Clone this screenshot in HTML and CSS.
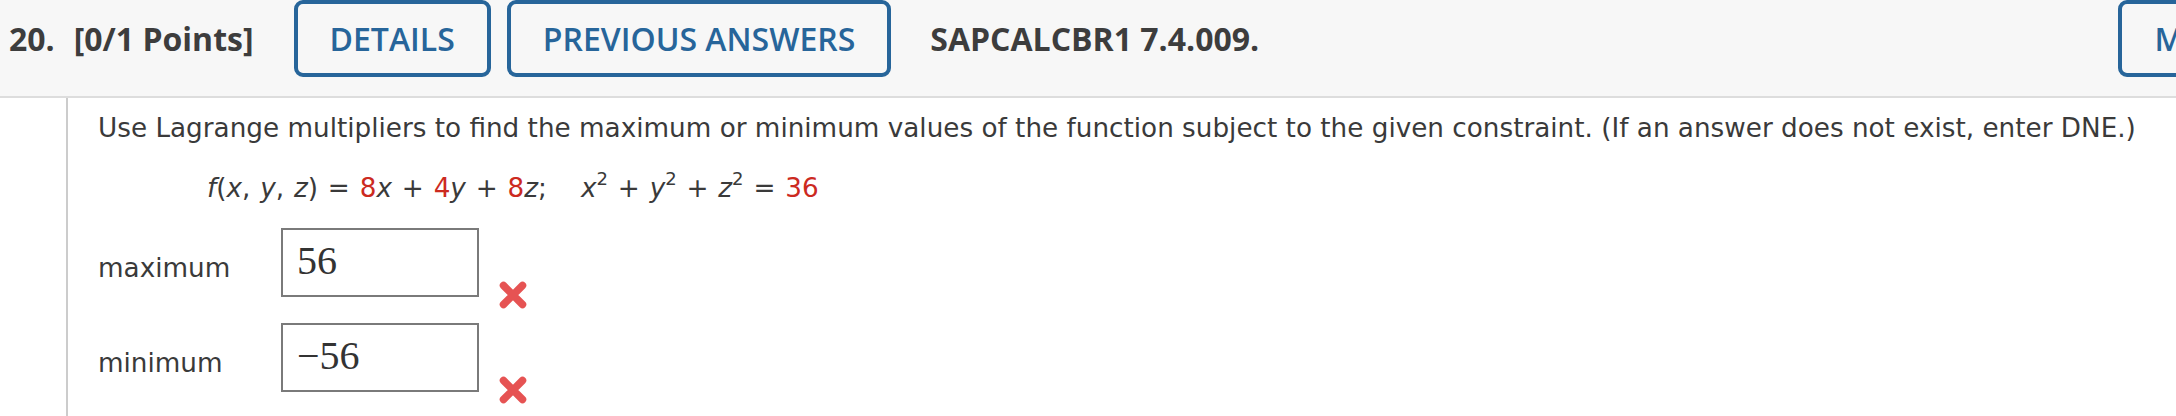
FILE: index.html
```html
<!DOCTYPE html>
<html lang="en">
<head>
<meta charset="utf-8">
<title>Question 20</title>
<link rel="stylesheet" href="styles.css">
</head>
<body>
<div class="question">
  <div class="qhead">
    <span class="qnum">20.</span>
    <span class="qpts">[0/1 Points]</span>
    <button class="btn btn-details">DETAILS</button>
    <button class="btn btn-prev">PREVIOUS ANSWERS</button>
    <span class="qid">SAPCALCBR1 7.4.009.</span>
    <button class="btn btn-notes">MY NOTES</button>
  </div>
  <div class="qbody">
    <p class="prompt">Use Lagrange multipliers to find the maximum or minimum values of the function subject to the given constraint. (If an answer does not exist, enter DNE.)</p>
    <p class="formula"><i>f</i>(<i>x</i>, <i>y</i>, <i>z</i>) = <span class="red">8</span><i>x</i> + <span class="red">4</span><i>y</i> + <span class="red">8</span><i>z</i>;<span class="sep"></span><i>x</i><sup>2</sup> + <i>y</i><sup>2</sup> + <i>z</i><sup>2</sup> = <span class="red">36</span></p>
    <div class="answers">
      <div class="row">
        <span class="label">maximum</span>
        <div class="box">56</div>
        <svg class="wrong" viewBox="0 0 28 28" width="28" height="28"><path d="M4.5 4.5 L23.5 23.5 M23.5 4.5 L4.5 23.5"/></svg>
      </div>
      <div class="row">
        <span class="label">minimum</span>
        <div class="box">&minus;56</div>
        <svg class="wrong" viewBox="0 0 28 28" width="28" height="28"><path d="M4.5 4.5 L23.5 23.5 M23.5 4.5 L4.5 23.5"/></svg>
      </div>
    </div>
  </div>
</div>
</body>
</html>
```
FILE: styles.css
```css
html, body {
  margin: 0;
  padding: 0;
  background: #ffffff;
  overflow: hidden;
}
.question {
  width: 2176px;
  height: 416px;
}
.qhead {
  display: flex;
  align-items: center;
  height: 77px;
  padding: 0 0 19px 9px;
  background: #f7f7f7;
  border-bottom: 2px solid #dddddd;
  overflow: hidden;
  font-family: "Open Sans", sans-serif;
  color: #3d3d3d;
}
.qnum {
  font-size: 32px;
  font-weight: 700;
  margin-right: 19px;
}
.qpts {
  font-size: 32px;
  font-weight: 700;
  margin-right: 40px;
}
.qid {
  font-size: 32px;
  font-weight: 700;
  margin-left: 39px;
  flex: 1;
  white-space: nowrap;
}
.btn {
  flex-shrink: 0;
  box-sizing: border-box;
  height: 77px;
  padding: 0 32px;
  border: 4px solid #27659a;
  border-radius: 9px;
  background: transparent;
  color: #27659a;
  font-family: "Open Sans", sans-serif;
  font-weight: 600;
  font-size: 32px;
  white-space: nowrap;
}
.btn-prev {
  margin-left: 16px;
}
.btn-notes {
  margin-right: -175px;
}
.qbody {
  margin-left: 66px;
  border-left: 2px solid #cccccc;
  padding: 14px 0 0 30px;
  height: 320px;
  font-family: "DejaVu Sans", Verdana, sans-serif;
  color: #3a3a3a;
  font-size: 26.25px;
}
.prompt {
  margin: 0;
  line-height: 32px;
  white-space: nowrap;
}
.formula {
  margin: 28px 0 0 109px;
  line-height: 32px;
  white-space: nowrap;
  word-spacing: 1.5px;
}
.formula sup {
  font-size: 18px;
  line-height: 0;
  vertical-align: 12px;
}
.red {
  color: #cc2a1f;
}
.sep {
  display: inline-block;
  width: 34px;
}
.answers {
  display: flex;
  flex-direction: column;
  gap: 26px;
  margin-top: 24px;
}
.row {
  display: flex;
  align-items: center;
}
.label {
  width: 183px;
  flex-shrink: 0;
  margin-top: 10px;
}
.box {
  box-sizing: border-box;
  width: 198px;
  height: 69px;
  border: 2px solid #7a7a7a;
  padding: 0 0 0 14px;
  font-family: "Liberation Serif", "DejaVu Serif", serif;
  font-size: 40px;
  line-height: 62px;
  color: #333333;
  background: #ffffff;
}
.wrong {
  align-self: flex-end;
  margin: 0 0 -12px 20px;
}
.wrong path {
  stroke: #e65353;
  stroke-width: 7.5;
  stroke-linecap: round;
  fill: none;
}
```
